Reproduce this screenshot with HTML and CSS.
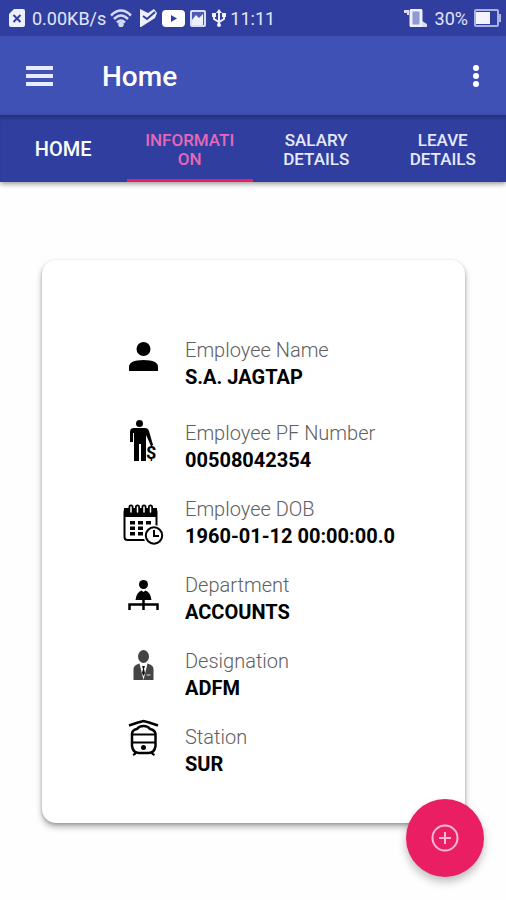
FILE: index.html
```html
<!DOCTYPE html>
<html lang="en">
<head>
<meta charset="utf-8">
<meta name="viewport" content="width=device-width, initial-scale=1">
<title>Home</title>
<link rel="stylesheet" href="styles.css">
</head>
<body>
<div class="status">
  <svg class="sim" width="16" height="18" viewBox="0 0 16 18"><path fill="#eef0ff" d="M5 0h9a2 2 0 0 1 2 2v14a2 2 0 0 1-2 2H2a2 2 0 0 1-2-2V5z"/><path d="M4.500 6l7 7M11.500 6l-7 7" stroke="#303f9f" stroke-width="2"/></svg>
  <span class="speed">0.00KB/s</span>
  <svg class="wifi" width="22" height="18" viewBox="0 0 22 18" fill="none" stroke="#d5d9f5" stroke-width="2.500"><path d="M1 6.500Q11-3.500 21 6.500M4 10q7-7 14 0M7 13.500q4-4 8 0"/><circle cx="11" cy="15.500" r="1.500" fill="#fff"/></svg>
  <svg class="play" width="17" height="18" viewBox="0 0 17 18"><path fill="#eef0ff" d="M0 0l8 4 6-4 3 4-2 5L1 18H0z"/><path d="M3 7l4 3 8-7" fill="none" stroke="#303f9f" stroke-width="2"/></svg>
  <svg class="video" width="23" height="17" viewBox="0 0 23 17"><rect width="23" height="17" rx="4" fill="#fff"/><path d="M9 5l6 3.500L9 12z" fill="#303f9f"/></svg>
  <svg class="photo" width="16" height="17" viewBox="0 0 16 17"><rect x="1" y="1" width="14" height="15" rx="1" fill="#4e5ab0" stroke="#d9dcf6" stroke-width="2"/><path d="M2 10l4-5 3 3 4-4v11H2z" fill="#eef0ff"/></svg>
  <svg class="usb" width="14" height="18" viewBox="0 0 14 18" fill="none" stroke="#eef0ff" stroke-width="2"><path d="M7 2v14M2 6v4l5 3 5-3V6"/><path fill="#eef0ff" stroke="none" d="M7 0l3 4H4zM0 4h4v4H0zM10 4h4v4h-4z"/><circle cx="7" cy="16" r="2" fill="#eef0ff" stroke="none"/></svg>
  <span>11:11</span>
  <svg class="vibrate" width="23" height="18" viewBox="0 0 23 18"><rect x="7" y="1" width="10" height="16" rx="1" fill="#8f99d3" stroke="#eef0ff" stroke-width="3"/><path d="M0 1h5v5H3V4H0zM18 12l5 3v3h-5z" fill="#d9dcf6"/></svg>
  <span class="percent">30%</span>
  <svg class="battery" width="27" height="18" viewBox="0 0 27 18"><rect x="1" y="1" width="23" height="16" rx="1" fill="none" stroke="#aab2e3" stroke-width="2"/><path fill="#f3f4ff" d="M2 3h14v12H2z"/><path fill="#aab2e3" d="M25 5h2v8h-2z"/></svg>
</div>
<header class="appbar">
  <button class="iconbtn" aria-label="Menu"><svg width="27" height="20" viewBox="0 0 27 20" fill="#e8ebff"><path d="M0 0h27v4H0zM0 8h27v4H0zM0 16h27v4H0z"/></svg></button>
  <h1>Home</h1>
  <button class="iconbtn more" aria-label="More options"><svg width="8" height="24" viewBox="0 0 8 24" fill="#fff"><circle cx="4" cy="4" r="3"/><circle cx="4" cy="12" r="3"/><circle cx="4" cy="20" r="3"/></svg></button>
</header>
<nav class="tabs">
  <a class="tab single" href="#home">HOME</a>
  <a class="tab active" href="#information" aria-current="page">INFORMATI<br>ON</a>
  <a class="tab" href="#salary">SALARY<br>DETAILS</a>
  <a class="tab" href="#leave">LEAVE<br>DETAILS</a>
</nav>
<main>
  <dl class="card">
    <div class="row first">
      <svg viewBox="121 337 44 54"><circle cx="143.500" cy="349" r="7"/><path d="M129 371v-4q0-7 14.500-7t14.500 7v4z"/></svg>
      <dt>Employee Name</dt><dd>S.A. JAGTAP</dd>
    </div>
    <div class="row">
      <svg viewBox="121 420 44 54"><circle cx="139.500" cy="423.500" r="3.500"/><path d="M134 428h11q3 0 4 3l4 14-2 1-5-11v26h-5v-17h-2v17h-5v-28h-1v9h-3v-10q0-4 4-4z"/><text x="146" y="459" class="dollar">$</text></svg>
      <dt>Employee PF Number</dt><dd>00508042354</dd>
    </div>
    <div class="row">
      <svg viewBox="121 496 44 54"><rect x="124.500" y="509" width="32" height="31" rx="3" fill="#fff" stroke="#000" stroke-width="2"/><path d="M124 508h33v9h-33z"/><path d="M131 507v5M137.500 507v5M144 507v5M150.500 507v5" stroke="#000" stroke-width="5" stroke-linecap="round"/><path d="M131 507v5M137.500 507v5M144 507v5M150.500 507v5" stroke="#fff" stroke-width="1.500" stroke-linecap="round"/><path d="M130 521h5v3.500h-5zM138 521h5v3.500h-5zM146 521h5v3.500h-5zM130 526.500h5v3.500h-5zM138 526.500h5v3.500h-5zM130 532h5v3.500h-5zM138 532h5v3.500h-5z"/><circle cx="154" cy="535.500" r="10.500" fill="#fff"/><circle cx="154" cy="535.500" r="8.200" fill="#fff" stroke="#000" stroke-width="2"/><path d="M154 530v6h5" fill="none" stroke="#000" stroke-width="2"/></svg>
      <dt>Employee DOB</dt><dd>1960-01-12 00:00:00.0</dd>
    </div>
    <div class="row">
      <svg viewBox="121 572 44 54"><circle cx="143.500" cy="584.500" r="4.500"/><path d="M135.500 600q1-8 6-9.500l2 1.500 2-1.500q5 1.500 6 9.500z"/><path d="M129.500 610v-5.500h28v5.500M143.500 598v12" fill="none" stroke="#000" stroke-width="2.500"/></svg>
      <dt>Department</dt><dd>ACCOUNTS</dd>
    </div>
    <div class="row">
      <svg viewBox="121 648 44 54" fill="#444"><ellipse cx="143.500" cy="656.500" rx="5.500" ry="6.500"/><path d="M133.500 680v-11q0-4 6-5.500l4 16.500zM153.500 680v-11q0-4-6-5.500l-4 16.500z"/><path d="M142 666h3l-1 3 1 4-1.500 3-1.500-3 1-4z" fill="#111"/><path d="M146.500 675h4" stroke="#ddd"/></svg>
      <dt>Designation</dt><dd>ADFM</dd>
    </div>
    <div class="row">
      <svg viewBox="121 723 44 54"><g fill="none" stroke="#000" stroke-width="2.500"><path d="M129 724.500l9-3 5.500-1.500 5.500 1.500 9 3"/><path d="M132 733q0-4 5-5 2-3 6.500-3t6.500 3q5 1 5.500 5v12q-1 7-7 7h-9.500q-6 0-7-7z"/><path d="M132 733.500h23.500M132 741.500h23.500" stroke-width="2"/><path d="M135 751v2l-2 1M152.500 751v2l2 1" stroke-width="2"/></g><circle cx="143.500" cy="746.500" r="2.500"/></svg>
      <dt>Station</dt><dd>SUR</dd>
    </div>
  </dl>
</main>
<button class="fab" aria-label="Add"><svg width="28" height="28" viewBox="0 0 28 28" fill="none" stroke="#ffb9d6" stroke-width="2"><circle cx="14" cy="14" r="12.500"/><path d="M14 8v12M8 14h12"/></svg></button>
</body>
</html>
```
FILE: styles.css
```css
* { box-sizing: border-box; }
body { margin: 0; background: #fefefe; font-family: Roboto, sans-serif; }
svg { display: block; flex: none; }
button { border: 0; padding: 0; background: none; cursor: pointer; }

.status {
  display: flex;
  align-items: center;
  height: 36px;
  padding: 0 5px 0 9px;
  background: #303f9f;
  color: #e3e6fc;
  font-size: 18px;
}
.speed { margin-left: 7px; }
.wifi { margin: 0 8px 0 4px; }
.video { margin: 0 5px; }
.usb { margin: 0 4px 0 6px; }
.vibrate { margin-left: auto; }
.percent { margin: 0 6px 0 8px; }

.appbar {
  display: flex;
  align-items: center;
  height: 79px;
  padding: 0 26px;
  background: #3f51b5;
}
.appbar h1 {
  flex: 1;
  margin: 0 0 0 49px;
  padding-top: 2px;
  color: #fff;
  font-size: 28px;
  font-weight: 500;
}

.tabs {
  display: grid;
  grid-template-columns: repeat(4, 1fr);
  height: 67px;
  background: #303f9f;
  box-shadow: inset 0 4px 3px -1px #26347f, 0 2px 5px rgba(0, 0, 0, .4);
}
.tab {
  display: flex;
  align-items: center;
  justify-content: center;
  padding-top: 5px;
  border-bottom: 3px solid transparent;
  color: #e6e9ff;
  font-size: 17px;
  font-weight: 500;
  line-height: 19px;
  text-align: center;
  text-decoration: none;
}
.single { color: #fff; font-size: 20px; }
.active { color: #e667b8; border-bottom-color: #e91e63; }

main { padding: 78px 41px 77px 42px; }
.card {
  display: grid;
  gap: 22px;
  margin: 0;
  padding: 77px 20px 45px 79px;
  border-radius: 14px;
  background: #fff;
  box-shadow: 0 4px 6px rgba(0, 0, 0, .3), 0 1px 3px rgba(0, 0, 0, .2);
}
.row {
  display: grid;
  grid-template-columns: 44px 1fr;
  grid-template-rows: 27px 27px;
  column-gap: 20px;
  line-height: 27px;
  font-size: 20px;
  white-space: nowrap;
}
.row svg { grid-row: 1 / 3; width: 44px; height: 54px; overflow: visible; }
.first { margin-bottom: 7px; }
dt { color: #606060; font-weight: 300; }
dd { margin: 0; color: #000; font-weight: 700; }
.dollar { font-size: 18px; font-weight: 700; }

.fab {
  position: fixed;
  right: 22px;
  bottom: 23px;
  display: grid;
  place-items: center;
  width: 78px;
  height: 78px;
  border-radius: 50%;
  background: #e91e63;
  box-shadow: 0 5px 8px rgba(0, 0, 0, .25);
}
```
